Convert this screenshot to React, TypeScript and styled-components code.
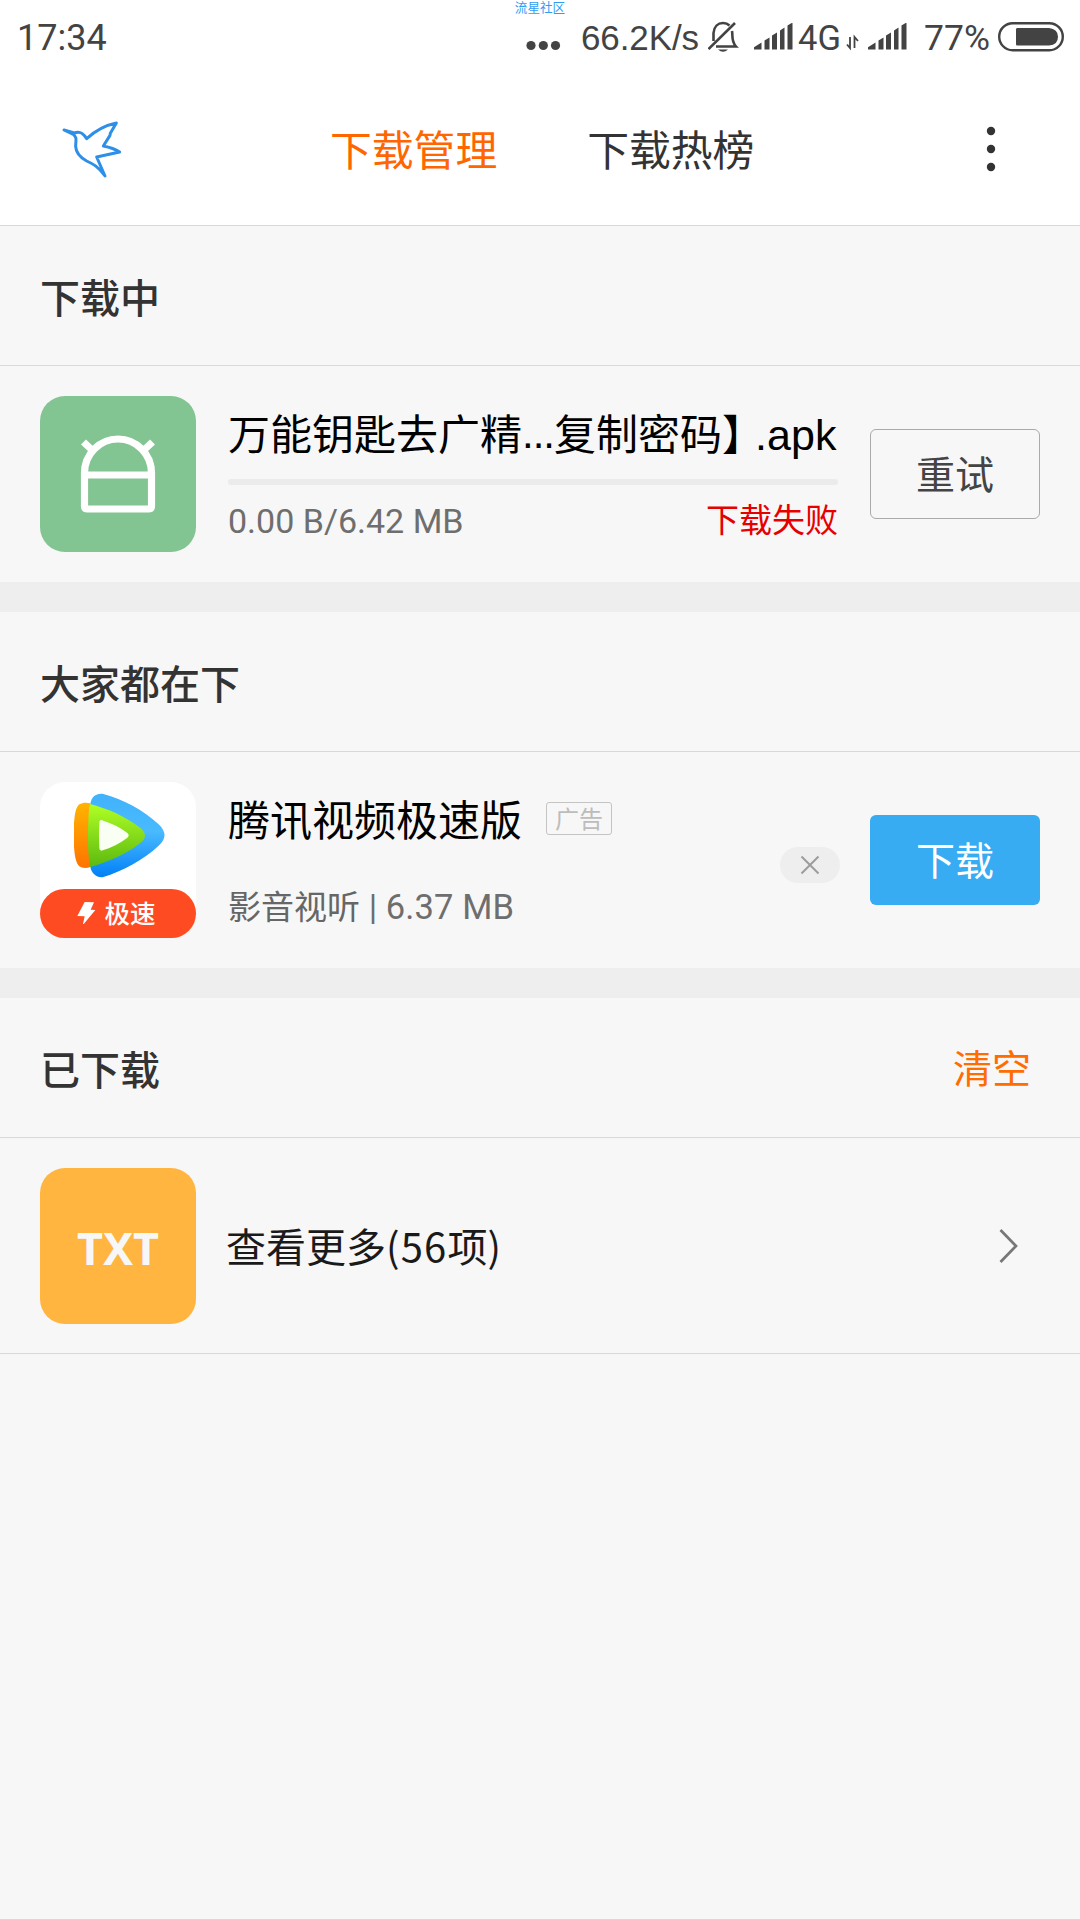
import React from "react";
import styled, { createGlobalStyle } from "styled-components";

const Global = createGlobalStyle`
  * { box-sizing: border-box; }
  body { margin: 0; background: #f7f7f7; }
`;

const cjk = `"Noto Sans CJK SC", sans-serif`;

const Screen = styled.div`
  position: relative;
  display: flex;
  flex-direction: column;
  width: 1080px;
  height: 1920px;
  overflow: hidden;
  background: #f7f7f7;
  border-bottom: 1px solid #d9d9d9;
  font-family: "Liberation Sans", ${cjk};
  white-space: nowrap;
`;

const Watermark = styled.div`
  position: absolute;
  top: 0;
  left: 0;
  right: 0;
  text-align: center;
  font: 12.6px/13px ${cjk};
  color: #2f9df4;
`;

const Top = styled.header`
  height: 226px;
  background: #fff;
  border-bottom: 1px solid #d6d9d8;
`;

const StatusBar = styled.div`
  display: flex;
  align-items: center;
  height: 72px;
  padding: 2px 16px 0 17px;
  color: #434343;
`;

const StatusText = styled.span<{ $size: number; $width: number; $spacing?: number; $indent?: number; $roboto?: boolean }>`
  width: ${(p) => p.$width}px;
  padding-left: ${(p) => p.$indent ?? 0}px;
  padding-top: 1px;
  font-family: ${(p) => (p.$roboto ? "Roboto" : '"Liberation Sans"')}, sans-serif;
  font-size: ${(p) => p.$size}px;
  letter-spacing: ${(p) => p.$spacing ?? 0}px;
  line-height: 70px;
`;

const StatusSvg = styled.svg`
  flex: none;
  display: block;
`;

const Spacer = styled.div`
  flex: 1;
`;

const AppBar = styled.nav`
  display: flex;
  align-items: center;
  height: 153px;
  padding: 0 77px 0 40px;
`;

const Bird = styled.svg`
  margin-bottom: 7px;
`;

const Tabs = styled.div`
  display: flex;
  gap: 90px;
  margin-left: 190px;
  padding-bottom: 1px;
`;

const Tab = styled.span<{ $active?: boolean }>`
  font: 41.8px/60px ${cjk};
  color: ${(p) => (p.$active ? "#ff6600" : "#333")};
`;

const SectionHead = styled.div`
  display: flex;
  align-items: center;
  justify-content: space-between;
  height: 140px;
  padding: 0 49px 0 40px;
  border-bottom: 1px solid #d9d9d9;
`;

const SectionTitle = styled.h2`
  margin: 0;
  font: 500 40px/60px ${cjk};
  color: #333;
`;

const Clear = styled.span`
  padding-bottom: 3px;
  font: 39px/60px ${cjk};
  color: #ff6c00;
`;

const Row = styled.div<{ $last?: boolean }>`
  display: flex;
  align-items: center;
  height: 216px;
  padding: 0 40px;
  border-bottom: ${(p) => (p.$last ? "1px solid #d9d9d9" : "none")};
`;

const Band = styled.div`
  height: 30px;
  background: #eee;
`;

const Tile = styled.div<{ $bg: string }>`
  display: flex;
  flex-direction: column;
  flex: none;
  width: 156px;
  height: 156px;
  border-radius: 25px;
  background: ${(p) => p.$bg};
`;

const TxtTile = styled(Tile)`
  align-items: center;
  justify-content: center;
  padding-top: 5px;
  font: bold 45px/60px "Noto Sans", sans-serif;
  color: #f7f7f7;
`;

const Ribbon = styled.div`
  display: flex;
  align-items: center;
  justify-content: center;
  gap: 8px;
  height: 49px;
  padding: 0 3px 3px 0;
  border-radius: 25px;
  background: #ff4b22;
  color: #fff;
  font: 500 25.5px/46px ${cjk};
`;

const Info = styled.div`
  display: flex;
  flex-direction: column;
  width: 610px;
  height: 156px;
  margin-left: 32px;
`;

const NameLine = styled.div`
  display: flex;
  align-items: center;
  height: 72px;
  margin-bottom: 4px;
  font: 42px/72px ${cjk};
  color: #000;
`;

const Latin = styled.span<{ $size: number; $width?: number; $spacing?: number; $drop?: number; $pull?: number }>`
  display: inline-block;
  width: ${(p) => (p.$width ? `${p.$width}px` : "auto")};
  margin-left: ${(p) => -(p.$pull ?? 0)}px;
  padding-top: ${(p) => p.$drop ?? 0}px;
  font-family: "Liberation Sans", sans-serif;
  font-size: ${(p) => p.$size}px;
  letter-spacing: ${(p) => p.$spacing ?? 0}px;
`;

const MetaLatin = styled(Latin)`
  font-family: Roboto, sans-serif;
  color: #6e6e6e;
`;

const Progress = styled.div`
  height: 6px;
  margin: 7px 0 0;
  border-radius: 3px;
  background: #ebebeb;
`;

const MetaLine = styled.div<{ $gap: number }>`
  display: flex;
  justify-content: space-between;
  margin-top: ${(p) => p.$gap}px;
  font: 33px/48px ${cjk};
  color: #666;
`;

const Failed = styled.span`
  color: #e60000;
`;

const AdBadge = styled.span`
  display: flex;
  align-items: center;
  justify-content: center;
  width: 66px;
  height: 33px;
  margin-left: 24px;
  border: 1px solid #c4c4c4;
  border-radius: 3px;
  font: 24px/30px ${cjk};
  color: #bcbcbc;
`;

const Narrow = styled(Info)`
  width: 552px;
`;

const Dismiss = styled.button`
  display: flex;
  align-items: center;
  justify-content: center;
  width: 60px;
  height: 36px;
  margin-top: 10px;
  padding: 0;
  border: 0;
  border-radius: 18px;
  background: #eee;
`;

const Action = styled.button<{ $primary?: boolean }>`
  width: 170px;
  height: 90px;
  margin-left: ${(p) => (p.$primary ? 30 : 32)}px;
  padding: 0 0 5px 0;
  border: ${(p) => (p.$primary ? "0" : "1px solid #aaa")};
  border-radius: 6px;
  background: ${(p) => (p.$primary ? "#37acf2" : "transparent")};
  font: 39px/60px ${cjk};
  color: ${(p) => (p.$primary ? "#fff" : "#444")};
`;

const More = styled.div`
  flex: 1;
  margin-left: 30px;
  padding-bottom: 2px;
  font: 40px/60px ${cjk};
  color: #1a1a1a;
`;

const Count = styled.span`
  letter-spacing: 1.2px;
`;

const Chevron = styled.svg`
  margin-right: 21px;
`;

const Signal = () => (
  <StatusSvg width="40" height="28" viewBox="0.500 0.500 40 28" fill="#434343">
    <path d="M0 27V25L8 20V27ZM11 27V18L16 15V27ZM18.500 27V13L23.500 10V27ZM26.500 27V8L31 5V27ZM34 27V3L39 0V27Z" />
  </StatusSvg>
);

export default function App() {
  return (
    <Screen>
      <Global />
      <Top>
        <StatusBar>
          <StatusText $size={36} $width={95} $roboto>17:34</StatusText>
          <Spacer />
          <StatusSvg width="55" height="72" viewBox="526 2 55 72" fill="#434343">
            <circle cx="531" cy="46.500" r="4.600" />
            <circle cx="543.300" cy="46.500" r="4.600" />
            <circle cx="555.500" cy="46.500" r="4.600" />
          </StatusSvg>
          <StatusText $size={35} $width={127} $spacing={-0.1}>66.2K/s</StatusText>
          <StatusSvg width="46" height="32" viewBox="1 0 46 32" fill="none" stroke="#434343" strokeWidth="2.600">
            <path d="M1.500 28L28 2" />
            <path d="M6.500 20V12C7 5.500 11 2 16 2C19 2 21 3 22.500 4.500M25 10C26 15 24 20 29 25.500H9" />
            <path d="M11 28.500H21Q16 33 11 28.500Z" fill="#434343" stroke="none" />
          </StatusSvg>
          <Signal />
          <StatusText $size={34.5} $width={52} $indent={4} $roboto>4G</StatusText>
          <StatusSvg width="22" height="28" viewBox="0 0 22 28" fill="none" stroke="#434343" strokeWidth="1.800">
            <path d="M4 14V25L1 21.500M8.500 25V14L12 18" />
          </StatusSvg>
          <Signal />
          <StatusText $size={35.5} $width={90} $indent={16} $roboto>77%</StatusText>
          <StatusSvg width="66" height="30" viewBox="0 0 66 30">
            <rect x="1.200" y="1.200" width="63.600" height="27" rx="13.500" fill="none" stroke="#434343" strokeWidth="2.400" />
            <path d="M19 6H51Q60 7 60 14.700Q60 23 51 23.500H19Q18 23.500 18 22V7.500Q18 6 19 6Z" fill="#434343" />
          </StatusSvg>
        </StatusBar>
        <AppBar>
          <Bird width="100" height="90" viewBox="0 0 300 270" fill="none" stroke="#2d8fe8" strokeWidth="9" strokeLinejoin="round">
            <path d="M72 90L103 99C118 93 128 97 140 116C165 93 195 76 229 69L211 100L210 106L190 138C210 142 225 147 239 156L170 171L195 228C175 200 160 192 140 183C120 172 108 158 107 140C107 120 112 113 100 103Z" />
          </Bird>
          <Tabs>
            <Tab $active>下载管理</Tab>
            <Tab>下载热榜</Tab>
          </Tabs>
          <Spacer />
          <svg width="24" height="60" viewBox="0 0 24 60" fill="#333">
            <circle cx="12" cy="12" r="4.200" />
            <circle cx="12" cy="30" r="4.200" />
            <circle cx="12" cy="48" r="4.200" />
          </svg>
        </AppBar>
      </Top>

      <SectionHead>
        <SectionTitle>下载中</SectionTitle>
      </SectionHead>
      <Row>
        <Tile $bg="#82c492">
          <svg width="156" height="156" viewBox="0 0 156 156" fill="none" stroke="#fff" strokeWidth="7.200">
            <path
              strokeLinejoin="round"
              d="M44.500 77A33.500 34 0 0 1 111.500 77V110Q111.500 113 108.500 113H47.500Q44.500 113 44.500 110ZM44.500 79H111.500M43.500 46L52 54M112.500 46L104 54"
            />
          </svg>
        </Tile>
        <Info>
          <NameLine>
            万能钥匙去广精<Latin $size={42} $width={32} $spacing={-1} $drop={3}>...</Latin>复制密码】
            <Latin $size={43} $spacing={0.1} $drop={5} $pull={9}>.apk</Latin>
          </NameLine>
          <Progress />
          <MetaLine $gap={9}>
            <MetaLatin $size={34} $spacing={0} $drop={3}>0.00 B/6.42 MB</MetaLatin>
            <Failed>下载失败</Failed>
          </MetaLine>
        </Info>
        <Action>重试</Action>
      </Row>
      <Band />

      <SectionHead>
        <SectionTitle>大家都在下</SectionTitle>
      </SectionHead>
      <Row>
        <Tile $bg="#fff">
          <svg width="156" height="107" viewBox="60 66 468 321">
            <defs>
              <linearGradient id="blue" x1="0" y1="0" x2="0" y2="1">
                <stop offset="0" stopColor="#41b2fb" />
                <stop offset="0.450" stopColor="#4abaff" />
                <stop offset="1" stopColor="#0080f6" />
              </linearGradient>
              <linearGradient id="green" x1="0" y1="0" x2="0" y2="1">
                <stop offset="0" stopColor="#b0ff24" />
                <stop offset="1" stopColor="#5cb910" />
              </linearGradient>
              <linearGradient id="orange" x1="0" y1="0" x2="0" y2="1">
                <stop offset="0" stopColor="#ffb400" />
                <stop offset="1" stopColor="#ff7300" />
              </linearGradient>
            </defs>
            <path fill="url(#blue)" d="M211 132C214 108 232 98 250 102C310 118 370 150 415 192C440 215 440 236 415 258C370 300 305 335 250 351C232 355 214 340 211 320Z" />
            <path fill="url(#orange)" d="M211 130C200 127 188 127 178 133C168 141 164 160 162 190V260C164 290 168 308 178 319C188 326 200 325 211 321Z" />
            <path fill="url(#green)" d="M210 132C260 145 315 168 360 203C380 220 380 233 360 250C315 285 260 308 210 321C202 290 202 165 210 132Z" />
            <path fill="#f9fff2" d="M244 180C275 190 300 202 322 219Q330 226 322 233C300 250 275 263 244 272Q238 272 238 262Q236 226 238 190Q238 180 244 180Z" />
          </svg>
          <Ribbon>
            <svg width="19" height="24" viewBox="173 421 57 72" fill="#fff">
              <path d="M196 427L224 428L214 450L228 451L190 497L196 470L174 469Z" />
            </svg>
            极速
          </Ribbon>
        </Tile>
        <Narrow>
          <NameLine>
            腾讯视频极速版
            <AdBadge>广告</AdBadge>
          </NameLine>
          <MetaLine $gap={23}>
            <span>影音视听</span>
            <MetaLatin $size={34.5} $drop={2} $spacing={0.1}>&nbsp;|&nbsp;6.37 MB</MetaLatin>
            <Spacer />
          </MetaLine>
        </Narrow>
        <Dismiss>
          <svg width="20" height="20" viewBox="0 0 20 20" stroke="#9c9c9c" strokeWidth="2">
            <path d="M1.500 1.500L18.500 18.500M18.500 1.500L1.500 18.500" />
          </svg>
        </Dismiss>
        <Action $primary>下载</Action>
      </Row>
      <Band />

      <SectionHead>
        <SectionTitle>已下载</SectionTitle>
        <Clear>清空</Clear>
      </SectionHead>
      <Row $last>
        <TxtTile $bg="#ffb540">TXT</TxtTile>
        <More>
          查看更多<Count>(56</Count>项)
        </More>
        <Chevron width="20" height="36" viewBox="0 0 20 36" fill="none" stroke="#777" strokeWidth="2.700">
          <path d="M1.500 2L17 18L1.500 34" />
        </Chevron>
      </Row>
      <Watermark>流星社区</Watermark>
    </Screen>
  );
}
